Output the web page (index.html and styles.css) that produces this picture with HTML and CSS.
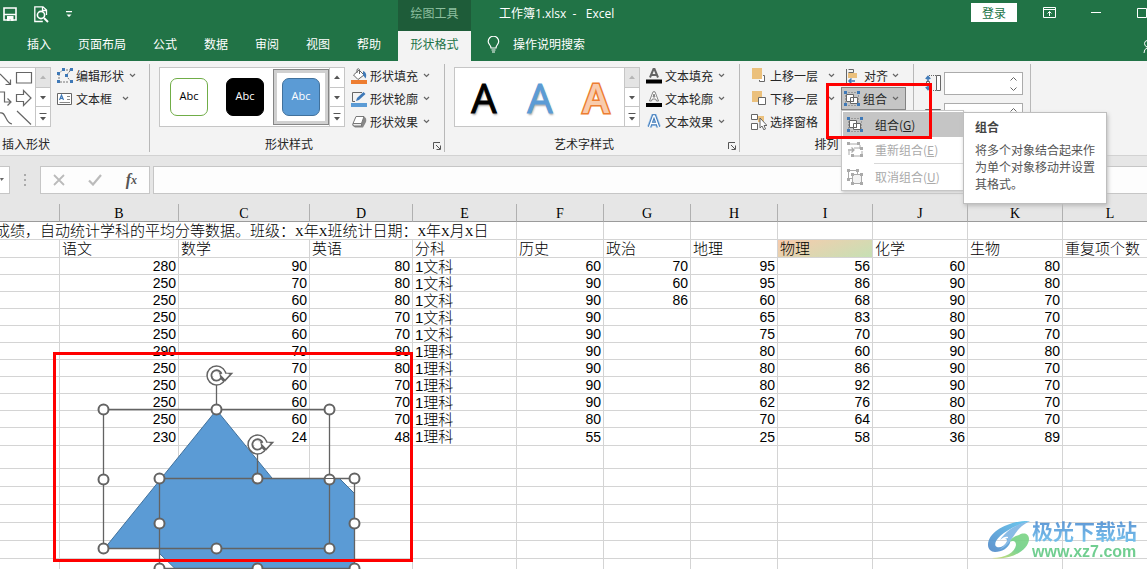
FILE: index.html
```html
<!DOCTYPE html>
<html lang="zh-CN">
<head>
<meta charset="utf-8">
<title>工作簿1.xlsx - Excel</title>
<link rel="stylesheet" href="styles.css">
</head>
<body>
<svg class="defs" aria-hidden="true">
  <symbol id="chev" viewBox="0 0 7 5"><path d="M1 1l2.500 2.500L6 1" fill="none" stroke="#666" stroke-width="1.200"/></symbol>
  <symbol id="up" viewBox="0 0 14 10"><path d="M4 7h6L7 3.500z" fill="currentColor"/></symbol>
  <symbol id="down" viewBox="0 0 14 10"><path d="M4 4h6L7 7.500z" fill="currentColor"/></symbol>
  <symbol id="more" viewBox="0 0 14 10"><path d="M3.500 1.500h7" fill="none" stroke="currentColor"/><path d="M4 5h6L7 8.500z" fill="currentColor"/></symbol>
  <symbol id="launch" viewBox="0 0 10 10"><path d="M1.500 8V1.500H8M4 4l4 4M8.500 4.500v4h-4" fill="none" stroke="#555"/></symbol>
  <symbol id="group" viewBox="0 0 16 16"><path d="M1.500 4v8M14.500 4v8M4 1.500h8M4 14.500h8" stroke="#999" stroke-width="1" stroke-dasharray="2 1" fill="none"/><path d="M2.500 3.500h7v7h-7zM6.500 6.500h7v6h-7z" fill="#fff" stroke="#666"/><path d="M6.500 10.500h3v-4" fill="none" stroke="#666"/><path d="M0 0h3v3H0zM13 0h3v3h-3zM0 12h3v3H0zM13 12h3v3h-3z" fill="#3f79b7"/></symbol>
</svg>

<header class="app-head">
  <div class="title-bar">
    <div class="quick">
      <button class="plain" aria-label="保存"><svg width="14" height="14" viewBox="0 0 14 14"><path d="M1 1h12v12H1zM1.500 7.500h11" fill="none" stroke="#fff" stroke-width="1.600"/><path d="M4 9h6.500v5H8v-2H6.500v2H4z" fill="#fff"/></svg></button>
      <button class="plain" aria-label="打印预览"><svg width="15" height="17" viewBox="0 0 15 17"><path d="M12.500 9V4L9 .8H.8v14.700h8M8.500 1v3.500h4" fill="none" stroke="#fff" stroke-width="1.300"/><circle cx="7" cy="9" r="3.600" fill="none" stroke="#fff" stroke-width="1.600"/><path d="M10 12l4 4" stroke="#fff" stroke-width="2"/></svg></button>
      <button class="plain" aria-label="自定义快速访问工具栏"><svg width="6" height="7" viewBox="0 0 6 7"><path d="M0 0h6v1.200H0zM.5 3.500h5L3 6z" fill="#fff"/></svg></button>
    </div>
    <div class="context">绘图工具</div>
    <div class="doc-title">工作簿1.xlsx&nbsp; -&nbsp;&nbsp; Excel</div>
    <div class="window-tools">
      <button class="login">登录</button>
      <button class="plain" aria-label="功能区显示选项"><svg width="13" height="11" viewBox="0 0 13 11"><path d="M.5.500h12v10H.5zM.5 2.500h12M6.500 9V4.500M4.500 6.500l2-2 2 2" fill="none" stroke="#fff"/></svg></button>
      <button class="plain" aria-label="最小化"><svg width="11" height="10" viewBox="0 0 11 10"><path d="M0 4.500h10" stroke="#fff"/></svg></button>
      <button class="plain" aria-label="最大化"><svg width="10" height="10" viewBox="0 0 10 10"><path d="M.5.500h9v9h-9z" fill="none" stroke="#fff"/></svg></button>
    </div>
  </div>
  <nav class="tabs">
    <button>插入</button><button>页面布局</button><button>公式</button><button>数据</button><button>审阅</button><button>视图</button><button>帮助</button>
    <button class="active">形状格式</button>
    <button class="tell"><svg width="13" height="17" viewBox="0 0 13 17"><path d="M4 12c0-3-2.800-3.500-2.800-6.500a5 5 0 0110.500 0C11.700 8.500 9 9 9 12zM4.500 14h4M5 16h3" fill="none" stroke="#fff" stroke-width="1.200"/></svg>操作说明搜索</button>
    <svg class="share" width="4" height="16" viewBox="0 0 4 16"><path d="M4 1.500Q1.500 2 1.500 4.500T4 8M1 14q0-4 3-5" fill="none" stroke="#fff"/></svg>
  </nav>
</header>

<section class="ribbon">
  <div class="group g-insert">
    <div class="group-body">
      <div class="gallery shapes">
        <svg width="35" height="59" viewBox="0 68 35 59" fill="none" stroke="#666" stroke-width="1.200"><path d="M0 74l10 10M10.500 79.500v5h-5M16.500 72.500h15v10.500h-15zM0 92h4.500v10H10M7.500 98.500l3.500 3.500-3.500 3.500M16.500 94.500h7v-4l7.500 7.500-7.500 7.500v-4h-7zM0 113c6-2 5 10 12 11M17 111l14 13.500"/></svg>
        <div class="scroller"><button class="off" aria-label="上"><svg><use href="#up"/></svg></button><button aria-label="下"><svg><use href="#down"/></svg></button><button aria-label="更多"><svg><use href="#more"/></svg></button></div>
      </div>
      <div class="stack">
        <button class="cmd"><svg class="ico" viewBox="0 0 16 16"><path d="M6 2h8M13 3L9 7.500l4 5M2 6v7M3 14h9M2 5l4-3" fill="none" stroke="#777" stroke-dasharray="2 1"/><path d="M5 0h3v3H5zM13 0h3v3h-3zM0 4h3v3H0zM8 6h3v3H8zM0 12h3v3H0zM13 12h3v3h-3z" fill="#3f79b7"/></svg>编辑形状<svg class="chev"><use href="#chev"/></svg></button>
        <button class="cmd"><svg class="ico" viewBox="0 0 16 16"><path d="M.5 2.500h14v11H.5z" fill="#fff" stroke="#666"/><path d="M10 5.500h3M10 8.500h3M2.500 11.500h10.500" stroke="#888"/><path d="M2.500 9l2-5 2 5M3.200 7.300h2.600" fill="none" stroke="#3f79b7" stroke-width="1.200"/></svg>文本框<svg class="chev wide"><use href="#chev"/></svg></button>
      </div>
    </div>
    <div class="group-label"><span>插入形状</span></div>
  </div>

  <div class="group g-style">
    <div class="group-body">
      <div class="gallery">
        <button class="item"><span class="tile t-line">Abc</span></button>
        <button class="item"><span class="tile t-black">Abc</span></button>
        <button class="item selected"><span class="tile t-blue">Abc</span></button>
        <div class="scroller"><button aria-label="上"><svg><use href="#up"/></svg></button><button aria-label="下"><svg><use href="#down"/></svg></button><button aria-label="更多"><svg><use href="#more"/></svg></button></div>
      </div>
      <div class="stack">
        <button class="cmd"><svg class="ico" viewBox="0 0 16 16"><path d="M2.500 7L8 2l5 5-6 4.500zM6 5V1.500q1.500-1.500 2.500 0V6" fill="#fff" stroke="#666"/><path d="M12 3c3 1 4 4 2.500 7.500L12 7z" fill="#3f79b7"/><path d="M0 12h16v4H0z" fill="#ed7d31"/></svg>形状填充<svg class="chev"><use href="#chev"/></svg></button>
        <button class="cmd"><svg class="ico" viewBox="0 0 16 16"><path d="M11 1.500H1.500v9H4" fill="none" stroke="#666"/><path d="M5 10l1-3 6.500-6 2 2L8 9z" fill="#3f79b7"/><path d="M0 12h16v4H0z" fill="#5b9bd5"/></svg>形状轮廓<svg class="chev"><use href="#chev"/></svg></button>
        <button class="cmd"><svg class="ico" viewBox="0 0 16 16"><path d="M5 3h8.500q2.500 1 1.500 5l-3 5.500H4l-2.500-2z" fill="#888"/><path d="M5 2.500h8L10.500 9.500H2z" fill="#fff" stroke="#777"/><path d="M2 9.500h8.500v2.500H3q-2-.5-1-2.500z" fill="#eee" stroke="#777"/></svg>形状效果<svg class="chev"><use href="#chev"/></svg></button>
      </div>
    </div>
    <div class="group-label"><span>形状样式</span><button class="plain" aria-label="形状样式选项"><svg class="launch"><use href="#launch"/></svg></button></div>
  </div>

  <div class="group g-style">
    <div class="group-body">
      <div class="gallery">
        <button class="item art a-black">A</button>
        <button class="item art a-blue">A</button>
        <button class="item art a-orange">A</button>
        <div class="scroller"><button class="off" aria-label="上"><svg><use href="#up"/></svg></button><button aria-label="下"><svg><use href="#down"/></svg></button><button aria-label="更多"><svg><use href="#more"/></svg></button></div>
      </div>
      <div class="stack">
        <button class="cmd"><svg class="ico" viewBox="0 0 16 16"><path d="M4 9.500L7.500 1h1L12 9.500M5.500 7h5" fill="none" stroke="#666" stroke-width="2"/><path d="M0 11.500h16v4H0z"/></svg>文本填充<svg class="chev"><use href="#chev"/></svg></button>
        <button class="cmd"><svg class="ico" viewBox="0 0 16 16"><path d="M3.500 10L7 .8h2L12.500 10h-2L9.700 8H6.300l-.8 2zM7 6h2L8 3z" fill="#fff" stroke="#666" stroke-width=".8"/><path d="M0 12h16v4H0z"/></svg>文本轮廓<svg class="chev"><use href="#chev"/></svg></button>
        <button class="cmd"><svg class="ico" viewBox="0 0 16 16"><path d="M3.500 13L7.500 2h1l4 11M5.500 9.500h5" fill="none" stroke="#9dc3ea" stroke-width="5"/><path d="M3.500 13L7.500 2h1l4 11M5.500 9.500h5" fill="none" stroke="#3f79b7" stroke-width="3.400"/><path d="M3.500 13L7.500 2h1l4 11M5.500 9.500h5" fill="none" stroke="#fff" stroke-width="1.400"/></svg>文本效果<svg class="chev"><use href="#chev"/></svg></button>
      </div>
    </div>
    <div class="group-label"><span>艺术字样式</span><button class="plain" aria-label="艺术字样式选项"><svg class="launch"><use href="#launch"/></svg></button></div>
  </div>

  <div class="group g-arrange">
    <div class="group-body">
      <div class="stack">
        <button class="cmd"><svg class="ico" viewBox="0 0 16 16"><path d="M8.500 12v1.500h5v-6H12" fill="#fff" stroke="#666"/><path d="M1 0h10v11H1z" fill="#ebc07c"/></svg>上移一层<svg class="chev wide"><use href="#chev"/></svg></button>
        <button class="cmd"><svg class="ico" viewBox="0 0 16 16"><path d="M1 0h10v11H1z" fill="#ebc07c"/><path d="M7.500 6.500h7v7h-7z" fill="#fff" stroke="#666"/></svg>下移一层<svg class="chev wide"><use href="#chev"/></svg></button>
        <button class="cmd"><svg class="ico" viewBox="0 0 16 16"><path d="M7 2h6v6H7z" fill="#ebc07c"/><path d="M.5.500h6v5h-6zM.5 9.500h6v6h-6z" fill="#fff" stroke="#666"/><path d="M9 4v10l2-2 2 4 1.500-1-1.500-3.500h3z" fill="#fff" stroke="#666"/></svg>选择窗格</button>
      </div>
      <div class="stack tools">
        <button class="cmd"><svg class="ico" viewBox="0 0 16 16"><path d="M.5 1v14M2.500 1.500h5v3h-5" fill="none" stroke="#666"/><path d="M2 5h9v5H2z" fill="#ebc07c"/><path d="M9 13H3M5.500 10.500L3 13l2.500 2.500" fill="none" stroke="#3f79b7" stroke-width="1.500"/></svg>对齐<svg class="chev"><use href="#chev"/></svg></button>
        <div class="menu-anchor">
          <button class="cmd open"><svg class="ico"><use href="#group"/></svg>组合<svg class="chev"><use href="#chev"/></svg></button>
          <div class="menu">
            <button class="current"><svg class="ico"><use href="#group"/></svg><span>组合(<u>G</u>)</span></button>
            <button disabled><svg class="ico" viewBox="0 0 16 16"><path d="M3 2h9M13 3v4M2 13V9M6 14h7M15 9v4M7 6h6" fill="none" stroke="#aaa"/><path d="M1 8h6M4.500 5.500L7 8l-2.500 2.500" fill="none" stroke="#aaa" stroke-width="1.300"/><path d="M0 0h3v3H0zM10 0h3v3h-3zM4 12h3v3H4zM13 12h3v3h-3zM13 5h3v3h-3z" fill="#aaa"/></svg><span>重新组合(<u>E</u>)</span></button>
            <hr>
            <button disabled><svg class="ico" viewBox="0 0 16 16"><path d="M1.500 1.500h9v8h-9z" fill="#fff" stroke="#aaa"/><path d="M5.500 5.500h9v9h-9z" fill="#f2f2f2" stroke="#aaa"/><path d="M0 0h3v3H0zM9 0h3v3H9zM0 9h3v3H0zM4 4h3v3H4zM13 4h3v3h-3zM4 13h3v3H4zM13 13h3v3h-3z" fill="#aaa"/></svg><span>取消组合(<u>U</u>)</span></button>
            <div class="tooltip" role="tooltip"><strong>组合</strong><p>将多个对象结合起来作为单个对象移动并设置其格式。</p></div>
          </div>
          <div class="mark mark-menu"></div>
        </div>
      </div>
    </div>
    <div class="group-label"><span>排列</span></div>
  </div>

  <div class="group g-size">
    <label class="size"><svg width="16" height="17" viewBox="0 0 16 17"><path d="M11.500.500h4v15h-4z" fill="#fff" stroke="#666"/><path d="M4 .5h7M4 15.500h7" stroke="#666" stroke-dasharray="1 1"/><path d="M3 1v5M3 10v5M.8 4L3 1.500 5.200 4M.8 12L3 14.500 5.200 12" fill="none" stroke="#3f79b7" stroke-width="1.600"/><path d="M1.500 6.500h3v3h-3z" fill="none" stroke="#666"/></svg><span class="spin"><input type="text" aria-label="高度"><svg width="7" height="16" viewBox="0 0 7 16"><path d="M.5 4.500l3-3 3 3M.5 11.500l3 3 3-3" fill="none" stroke="#666"/></svg></span></label>
    <label class="size"><svg width="16" height="17" viewBox="0 0 16 17"><path d="M.5 3.500h15v6H.5z" fill="#fff" stroke="#666"/></svg><span class="spin"><input type="text" aria-label="宽度"><svg width="7" height="16" viewBox="0 0 7 16"><path d="M.5 4.500l3-3 3 3M.5 11.500l3 3 3-3" fill="none" stroke="#666"/></svg></span></label>
  </div>
</section>

<section class="formula-bar">
  <button class="name-box" aria-label="名称框"><svg width="6" height="5" viewBox="0 0 6 5"><path d="M0 0h4L1.500 3z" fill="#666"/></svg></button>
  <svg class="dots" width="2" height="12" viewBox="0 0 2 12"><path d="M0 0h2v2H0zM0 5h2v2H0zM0 10h2v2H0z" fill="#aaa"/></svg>
  <div class="fx-tools">
    <button class="plain" aria-label="取消"><svg width="12" height="12" viewBox="0 0 12 12"><path d="M1 1l10 10M11 1L1 11" stroke="#bbb" stroke-width="1.800"/></svg></button>
    <button class="plain" aria-label="输入"><svg width="14" height="12" viewBox="0 0 14 12"><path d="M1 6.500L5 10.500 13 1" fill="none" stroke="#bbb" stroke-width="2.200"/></svg></button>
    <button class="plain fx">f<small>x</small></button>
  </div>
  <input class="formula" type="text" aria-label="编辑栏">
</section>

<main class="sheet">
  <table>
    <colgroup><col class="ca"><col class="cb"><col class="cc"><col class="cd"><col class="ce"><col class="cf"><col class="cf"><col class="cf"><col class="ci"><col class="ci"><col class="ci"><col></colgroup>
    <thead><tr><th></th><th>B</th><th>C</th><th>D</th><th>E</th><th>F</th><th>G</th><th>H</th><th>I</th><th>J</th><th>K</th><th>L</th></tr></thead>
    <tbody>
      <tr class="text tall"><td class="headline" colspan="5">成绩，自动统计学科的平均分等数据。班级：<i>X</i>年<i>X</i>班统计日期：<i>X</i>年<i>X</i>月<i>X</i>日</td><td></td><td></td><td></td><td></td><td></td><td></td><td></td></tr>
      <tr class="text tall"><td></td><td>语文</td><td>数学</td><td>英语</td><td>分科</td><td>历史</td><td>政治</td><td>地理</td><td class="tinted">物理</td><td>化学</td><td>生物</td><td>重复项个数</td></tr>
      <tr><td></td><td>280</td><td>90</td><td>80</td><td class="kind">1文科</td><td>60</td><td>70</td><td>95</td><td>56</td><td>60</td><td>80</td><td></td></tr>
      <tr><td></td><td>250</td><td>70</td><td>80</td><td class="kind">1文科</td><td>90</td><td>60</td><td>95</td><td>86</td><td>90</td><td>80</td><td></td></tr>
      <tr><td></td><td>250</td><td>60</td><td>80</td><td class="kind">1文科</td><td>90</td><td>86</td><td>60</td><td>68</td><td>90</td><td>70</td><td></td></tr>
      <tr><td></td><td>250</td><td>60</td><td>70</td><td class="kind">1文科</td><td>90</td><td></td><td>65</td><td>83</td><td>80</td><td>70</td><td></td></tr>
      <tr><td></td><td>250</td><td>60</td><td>70</td><td class="kind">1文科</td><td>90</td><td></td><td>75</td><td>70</td><td>90</td><td>70</td><td></td></tr>
      <tr><td></td><td>290</td><td>70</td><td>80</td><td class="kind">1理科</td><td>90</td><td></td><td>80</td><td>60</td><td>90</td><td>80</td><td></td></tr>
      <tr><td></td><td>250</td><td>70</td><td>80</td><td class="kind">1理科</td><td>90</td><td></td><td>80</td><td>86</td><td>90</td><td>70</td><td></td></tr>
      <tr><td></td><td>250</td><td>60</td><td>70</td><td class="kind">1理科</td><td>90</td><td></td><td>80</td><td>92</td><td>90</td><td>70</td><td></td></tr>
      <tr><td></td><td>250</td><td>60</td><td>70</td><td class="kind">1理科</td><td>90</td><td></td><td>62</td><td>76</td><td>80</td><td>70</td><td></td></tr>
      <tr><td></td><td>250</td><td>60</td><td>70</td><td class="kind">1理科</td><td>80</td><td></td><td>70</td><td>64</td><td>80</td><td>70</td><td></td></tr>
      <tr class="tall"><td></td><td>230</td><td>24</td><td>48</td><td class="kind">1理科</td><td>55</td><td></td><td>25</td><td>58</td><td>36</td><td>89</td><td></td></tr>
      <tr class="taller"><td></td><td></td><td></td><td></td><td></td><td></td><td></td><td></td><td></td><td></td><td></td><td></td></tr>
      <tr class="tall"><td></td><td></td><td></td><td></td><td></td><td></td><td></td><td></td><td></td><td></td><td></td><td></td></tr>
      <tr class="tall"><td></td><td></td><td></td><td></td><td></td><td></td><td></td><td></td><td></td><td></td><td></td><td></td></tr>
      <tr class="tall"><td></td><td></td><td></td><td></td><td></td><td></td><td></td><td></td><td></td><td></td><td></td><td></td></tr>
      <tr class="tall"><td></td><td></td><td></td><td></td><td></td><td></td><td></td><td></td><td></td><td></td><td></td><td></td></tr>
      <tr class="tall"><td></td><td></td><td></td><td></td><td></td><td></td><td></td><td></td><td></td><td></td><td></td><td></td></tr>
      <tr class="tall"><td></td><td></td><td></td><td></td><td></td><td></td><td></td><td></td><td></td><td></td><td></td><td></td></tr>
    </tbody>
  </table>

  <svg class="drawing" width="430" height="376" viewBox="0 204 430 376" aria-label="已选中的形状">
    <defs>
      <circle id="knob" r="5" fill="#fff" stroke="#636363" stroke-width="2"/>
      <g id="rotate" fill="none"><circle r="7.200" stroke="#636363" stroke-width="6"/><path d="M2 -2H15L8.500 5z" fill="#fff" stroke="#636363" stroke-width="1.600"/><path d="M5.500 5A7.400 7.400 0 1 1 7.400 -1" stroke="#fff" stroke-width="2.600"/><path d="M5 -1h7" stroke="#fff" stroke-width="1.600"/><circle r="3.200" fill="#fff"/></g>
    </defs>
    <path d="M216.500 410L104.500 548.500H329.500z" fill="#5b9bd5" stroke="#41719c"/>
    <path d="M159.500 478.500H339.500L354.500 493.500V590H175V568.500L159.500 553.500z" fill="#5b9bd5" stroke="#41719c"/>
    <path d="M103.500 409.500h226v139h-226zM216.500 409V384M159.500 478.500h195v90h-195zM257.500 478V452" fill="none" stroke="#636363" stroke-width="1.300"/>
    <use href="#knob" x="103.500" y="409.500"/><use href="#knob" x="216.500" y="409.500"/><use href="#knob" x="329.500" y="409.500"/><use href="#knob" x="103.500" y="479.500"/><use href="#knob" x="329.500" y="479.500"/><use href="#knob" x="103.500" y="548.500"/><use href="#knob" x="216.500" y="548.500"/><use href="#knob" x="329.500" y="548.500"/>
    <path d="M325 478.500h9" stroke="#636363"/>
    <use href="#knob" x="159.500" y="478.500"/><use href="#knob" x="257.500" y="478.500"/><use href="#knob" x="354.500" y="478.500"/><use href="#knob" x="159.500" y="523.500"/><use href="#knob" x="354.500" y="523.500"/><use href="#knob" x="159.500" y="568.500"/><use href="#knob" x="257.500" y="568.500"/><use href="#knob" x="354.500" y="568.500"/>
    <use href="#rotate" x="216.500" y="375.500"/><use href="#rotate" x="257.500" y="444.500"/>
    <path d="M54.500 353.500h357v207h-357z" fill="none" stroke="#f00" stroke-width="3"/>
  </svg>

  <div class="watermark">
    <svg width="44" height="40" viewBox="0 0 44 40"><defs><linearGradient id="wb" x1="0" y1="1" x2="1" y2="0"><stop offset="0" stop-color="#4f87c8"/><stop offset="1" stop-color="#5cc4ee"/></linearGradient><linearGradient id="wg" x1="0" y1="1" x2="1" y2="0"><stop offset="0" stop-color="#d3dc6a"/><stop offset=".5" stop-color="#6fcf86"/><stop offset="1" stop-color="#7bd483"/></linearGradient></defs><path d="M42 1C25 0 0 10 0 25c0 4 3 7 7 7 7 0 13-4 15-9 1-4-2-6-5-4 2 0 3 1 2 3-2 4-7 6-10 5C3 24 12 10 42 1z" fill="url(#wb)"/><path d="M12 20C20 8 30 4 42 1 34 5 30 9 25 17c-3 5-7 10-14 13 6-5 9-9 9-13-2-1-5 0-8 3z" fill="#7db4e4"/><path d="M31 15c5-3 10-1 10 4C41 30 22 41 4 38c14 0 23-6 24-13 0-4-3-5-6-3 1-4 5-6 9-7z" fill="url(#wg)"/></svg>
    <div><div class="wm-name">极光下载站</div><div class="wm-url">www.xz7.com</div></div>
  </div>
</main>
</body>
</html>
```
FILE: styles.css
```css
* { box-sizing: border-box; }

body {
  margin: 0;
  height: 100vh;
  display: flex;
  flex-direction: column;
  overflow: hidden;
  background: #fff;
  color: #262626;
  font: 12px/16px "Noto Sans CJK SC", sans-serif;
}

button, input {
  font: inherit;
  color: inherit;
  margin: 0;
  padding: 0;
  border: 0;
  border-radius: 0;
  background: none;
  white-space: nowrap;
}

svg { display: block; flex: none; }
.defs { position: absolute; width: 0; height: 0; }
.plain { display: flex; align-items: center; }

/* Title bar and tabs */
.app-head { flex: none; background: #217346; color: #fff; }
.title-bar { display: flex; height: 31px; }
.quick {
  flex: 0 0 398px;
  display: flex;
  align-items: center;
  gap: 17px;
  padding: 0 0 3px 3px;
}
.context {
  width: 73px;
  padding-top: 5px;
  text-align: center;
  background: #1e5c39;
  color: #8dbf9f;
}
.doc-title { padding: 6px 0 0 28px; font-family: "Open Sans", "Noto Sans CJK SC", sans-serif; }
.window-tools {
  margin-left: auto;
  display: flex;
  align-items: center;
  gap: 35px;
  padding-bottom: 6px;
}
.login {
  width: 46px;
  height: 19px;
  margin-right: -9px;
  background: #fff;
  color: #217346;
}
.tabs { display: flex; align-items: stretch; height: 30px; padding-left: 27px; gap: 27px; }
.tabs button { padding-bottom: 4px; }
.tabs .active {
  width: 73px;
  margin: 0 -11px 0 -10px;
  background: #f3f3f3;
  color: #217346;
}
.tabs .tell { display: flex; align-items: center; gap: 13px; }
.share { margin: 8px 0 0 auto; }

/* Ribbon */
.ribbon {
  flex: none;
  display: flex;
  padding: 3px 0;
  background: #f3f3f3;
  border-bottom: 1px solid #d2d2d2;
}
.group { flex: none; display: flex; flex-direction: column; border-right: 1px solid #b8b8b8; }
.group-body { display: flex; height: 70px; }
.g-insert { width: 150px; }
.g-style { width: 295px; padding-left: 9px; }
.g-arrange { width: 174px; padding-left: 11px; }
.g-size { width: 117px; padding: 8px 7px 0 11px; gap: 8px; }
.group-label { display: flex; align-items: center; height: 18px; padding-top: 2px; }
.group-label span { flex: 1; text-align: center; }
.g-insert .group-label span { text-align: left; padding-left: 2px; }
.g-style .group-label { padding-right: 2px; margin-left: -9px; }
.g-arrange .group-label { margin-left: -11px; }
.launch { width: 10px; height: 10px; margin: 4px 0 0 4px; }

.gallery {
  display: flex;
  height: 60px;
  margin-top: 3px;
  border: 1px solid #c6c6c6;
  background: #fff;
}
.shapes { border-left: 0; }
.item {
  width: 56px;
  display: flex;
  align-items: center;
  justify-content: center;
}
.item:first-child { margin-left: 1px; }
.selected { margin: 1px 0; border: 1px solid #868686; box-shadow: inset 0 0 0 3px #d0d0d0; }
.tile {
  width: 38px;
  height: 38px;
  border-radius: 7px;
  border: 1px solid;
  font: 11px/34px "Open Sans", sans-serif;
  color: #fff;
}
.t-line { border-color: #70ad47; color: #000; }
.t-black { background: #000; border-color: #000; }
.t-blue { background: #5b9bd5; border-color: #41719c; }
.art { font: 400 40px/58px "Open Sans", sans-serif; text-shadow: 1px 2px 2px #aaa; padding-top: 2px; }
.a-black { color: #000; -webkit-text-stroke: 1px #000; }
.a-blue { color: #5b9bd5; -webkit-text-stroke: 1px #5b9bd5; }
.a-orange { font-weight: 600; color: #f8cbad; -webkit-text-stroke: 3px #ed7d31; paint-order: stroke fill; text-shadow: none; }

.scroller { width: 15px; display: flex; flex-direction: column; margin-left: auto; border-left: 1px solid #c6c6c6; color: #555; }
.scroller button { flex: 1; display: flex; align-items: center; justify-content: center; }
.scroller button + button { border-top: 1px solid #c6c6c6; }
.scroller svg { width: 14px; height: 10px; }
.scroller .off { background: #e4e4e4; color: #b5b5b5; }

.stack { display: flex; flex-direction: column; margin-left: 6px; }
.g-arrange .stack:first-child { margin-left: 0; }
.g-arrange .tools { margin-left: 6px; }
.cmd { display: flex; align-items: center; height: 23px; gap: 3px; }
.ico { width: 16px; height: 16px; }
.chev { width: 7px; height: 5px; margin-left: 2px; }
.wide { margin-left: 7px; }
.tools .cmd { width: 65px; padding-left: 5px; gap: 2px; }
.tools .open { padding-left: 2px; background: #c5c5c5; border: 1px solid #828282; gap: 3px; }

.menu-anchor { position: relative; }
.menu {
  position: absolute;
  z-index: 2;
  top: 23px;
  left: 0;
  width: 123px;
  padding: 1px 0 0 1px;
  background: #fff;
  border: 1px solid #c6c6c6;
  box-shadow: 1px 2px 3px #ccc;
}
.menu button { display: flex; align-items: center; gap: 12px; width: 100%; height: 26px; padding-left: 4px; color: #262626; }
.menu .current { background: #c5c5c5; height: 25px; }
.menu button:disabled { color: #aaa; }
.menu hr { margin: 0 0 0 31px; border: 0; border-top: 1px solid #d8d8d8; }
.tooltip {
  position: absolute;
  top: 1px;
  left: 121px;
  width: 144px;
  padding: 6px 10px 11px 11px;
  background: #fff;
  border: 1px solid #bebebe;
  box-shadow: 1px 2px 4px #bbb;
  color: #555;
}
.tooltip strong { color: #444; }
.tooltip p { margin: 6px 0 0; line-height: 17px; }
.mark { position: absolute; z-index: 3; border: 3px solid #f00; pointer-events: none; }
.mark-menu { top: -4px; left: -15px; width: 106px; height: 56px; }

.size { display: flex; align-items: center; gap: 3px; }
.spin { flex: 1; min-width: 0; display: flex; align-items: center; height: 23px; padding-right: 5px; border: 1px solid #ababab; background: #fff; }
.spin input { flex: 1; width: 0; min-width: 0; }

/* Formula bar */
.formula-bar { flex: none; display: flex; align-items: center; padding: 10px 0; background: #e6e6e6; }
.name-box { width: 10px; height: 28px; background: #fff; border: 1px solid #c6c6c6; border-left: 0; }
.dots { margin: 0 14px; }
.fx-tools { display: flex; align-items: center; justify-content: space-between; width: 110px; height: 28px; padding: 0 12px; background: #fdfdfd; border: 1px solid #c6c6c6; }
.fx { font: italic bold 16px/20px "Liberation Serif", serif; color: #555; }
.fx small { font-size: 12px; }
.formula { flex: 1; height: 28px; margin-left: 3px; background: #fdfdfd; border: 1px solid #c6c6c6; border-right: 0; }

/* Sheet */
.sheet { position: relative; flex: 1; min-height: 0; overflow: hidden; color: #000; }
table { width: 100%; min-width: 1158px; table-layout: fixed; border-collapse: separate; border-spacing: 0; }
.ca { width: 60px; }
.cb { width: 119px; }
.cc { width: 131px; }
.cd { width: 103px; }
.ce { width: 104px; }
.cf { width: 87px; }
.ci { width: 95px; }
th {
  height: 18px;
  padding: 2px 0 0;
  background: #e6e6e6;
  border-right: 1px solid #b0b0b0;
  border-bottom: 1px solid #9b9b9b;
  font: 14px/15px "Liberation Serif", serif;
}
td {
  height: 17px;
  padding: 0 2px;
  border-right: 1px solid #d4d4d4;
  border-bottom: 1px solid #d4d4d4;
  font: 300 14px/16px "Liberation Sans", "Noto Sans CJK SC", sans-serif;
  text-align: right;
  white-space: nowrap;
}
.tall td { height: 18px; }
.taller td { height: 23px; }
.text td, .kind { text-align: left; font-size: 15px; line-height: 15px; }
.kind { font-size: 15px; }
.text .headline { padding: 0; text-indent: -5px; }
.headline i { font: 12px/12px "Liberation Serif", serif; }
.text .tinted { background: linear-gradient(160deg, #f8cbad, #c6e0b4); }

.drawing { position: absolute; top: 0; left: 0; }
.watermark { position: absolute; right: 10px; bottom: 7px; display: flex; align-items: center; opacity: .9; }
.wm-name {
  font: bold 21px/24px "Noto Sans CJK SC", sans-serif;
  color: transparent;
  background: linear-gradient(#4a86cd, #69bcec);
  background-clip: text;
  -webkit-background-clip: text;
}
.wm-url { font: bold 16px/20px "Liberation Sans", sans-serif; color: #62c985; }
```
